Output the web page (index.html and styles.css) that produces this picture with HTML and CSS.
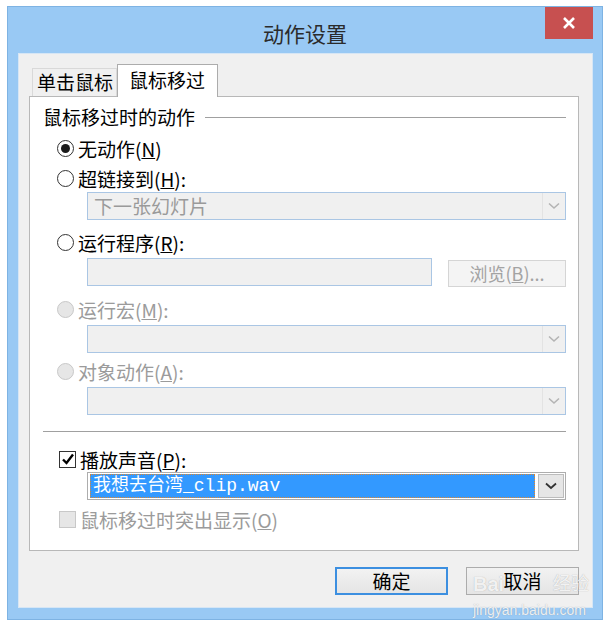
FILE: index.html
```html
<!DOCTYPE html>
<html lang="zh-CN">
<head>
    <meta charset="UTF-8">
    <title>动作设置</title>
    <link rel="stylesheet" href="styles.css">
</head>
<body>

    <div class="window">
        <!-- 标题栏 -->
        <div class="titlebar">
            <span></span>
            <span class="title">动作设置</span>
            <div class="close">
                <svg width="14" height="14" viewBox="0 0 14 14"><path d="M2 2 L12 12 M12 2 L2 12" stroke="#fff" stroke-width="2.6"/></svg>
            </div>
        </div>

        <div class="client">
            <div class="tabs">
                <div class="tab">单击鼠标</div>
                <div class="tab active">鼠标移过</div>
            </div>

            <div class="pane">
                <div class="group-title">
                    <span>鼠标移过时的动作</span>
                    <span class="rule"></span>
                </div>

                <div class="option first"><span class="radio checked"></span>无动作(<u>N</u>)</div>
                <div class="option"><span class="radio"></span>超链接到(<u>H</u>):</div>
                <div class="combo disabled">
                    <span class="combo-text">下一张幻灯片</span>
                    <span class="combo-arrow"><svg width="12" height="8" viewBox="0 0 12 8"><path d="M1 1.5 L6 6 L11 1.5" fill="none" stroke="#b4b4b4" stroke-width="1.6"/></svg></span>
                </div>

                <div class="option after-link"><span class="radio"></span>运行程序(<u>R</u>):</div>
                <div class="field-row">
                    <div class="textbox"></div>
                    <div class="browse">浏览(<u>B</u>)...</div>
                </div>

                <div class="option muted"><span class="radio off"></span>运行宏(<u>M</u>):</div>
                <div class="combo disabled">
                    <span class="combo-text"></span>
                    <span class="combo-arrow"><svg width="12" height="8" viewBox="0 0 12 8"><path d="M1 1.5 L6 6 L11 1.5" fill="none" stroke="#b4b4b4" stroke-width="1.6"/></svg></span>
                </div>

                <div class="option muted"><span class="radio off"></span>对象动作(<u>A</u>):</div>
                <div class="combo disabled">
                    <span class="combo-text"></span>
                    <span class="combo-arrow"><svg width="12" height="8" viewBox="0 0 12 8"><path d="M1 1.5 L6 6 L11 1.5" fill="none" stroke="#b4b4b4" stroke-width="1.6"/></svg></span>
                </div>

                <div class="separator"></div>

                <div class="option check-row"><span class="checkbox checked"><svg width="14" height="14" viewBox="0 0 14 14"><path d="M2 7.5 L5.5 11 L12 2.5" fill="none" stroke="#000" stroke-width="2.4"/></svg></span>播放声音(<u>P</u>):</div>
                <div class="combo active">
                    <span class="combo-text"><span class="selected">我想去台湾_clip.wav</span></span>
                    <span class="combo-arrow"><svg width="12" height="8" viewBox="0 0 12 8"><path d="M1 1.5 L6 6 L11 1.5" fill="none" stroke="#333" stroke-width="1.8"/></svg></span>
                </div>

                <div class="option muted last"><span class="checkbox off"></span>鼠标移过时突出显示(<u>O</u>)</div>
            </div>

            <div class="buttons">
                <div class="btn default">确定</div>
                <div class="btn">取消</div>
            </div>
        </div>

        <!-- 水印 -->
        <div class="watermark">
            <div class="wm-logo"><span>Bai</span><span class="wm-cn">经验</span></div>
            <div class="wm-url">jingyan.baidu.com</div>
        </div>
    </div>

</body>
</html>
```

FILE: styles.css
```css
body {
    margin: 0;
    padding: 6px 0 0 7px;
    background-color: #fff;
    font-family: "Microsoft YaHei", "Noto Sans CJK SC", sans-serif;
    font-size: 18px;
    color: #000;
}
.window {
    position: relative;
    width: 596px;
    height: 614px;
    box-sizing: border-box;
    border: 1px solid #7eb3e3;
    background-color: #99c9f4;
    display: flex;
    flex-direction: column;
}
.titlebar {
    height: 46px;
    display: grid;
    grid-template-columns: 1fr auto 1fr;
    align-items: start;
}
.title {
    margin-top: 12px;
    font-size: 21px;
    color: #2b2b2b;
    line-height: 28px;
}
.close {
    justify-self: end;
    margin-right: 9px;
    width: 48px;
    height: 32px;
    background-color: #c75050;
    display: flex;
    align-items: center;
    justify-content: center;
}
.client {
    flex: 1;
    margin: 0 9px 11px 10px;
    border: 1px solid #d6e6f5;
    background-color: #f0f0f0;
    padding: 10px 13px 0 10px;
    display: flex;
    flex-direction: column;
}
.tabs {
    display: flex;
    align-items: flex-end;
    height: 32px;
    padding-left: 3px;
}
.tab {
    height: 27px;
    line-height: 26px;
    padding: 0 3px 0 4px;
    border: 1px solid #d9d9d9;
    border-bottom: none;
    background-color: #f0f0f0;
    font-size: 19px;
}
.tab.active {
    height: 32px;
    line-height: 30px;
    padding: 0 12px 0 11px;
    border-color: #acacac;
    background-color: #fff;
    position: relative;
    top: 1px;
}
.pane {
    height: 455px;
    box-sizing: border-box;
    border: 1px solid #b8b8b8;
    background-color: #fff;
    padding: 8px 12px 0 13px;
    display: flex;
    flex-direction: column;
}
.group-title {
    display: flex;
    align-items: center;
    height: 22px;
    font-size: 19px;
}
.rule {
    flex: 1;
    height: 1px;
    margin: 2px 0 0 10px;
    background-color: #a0a0a0;
}
.option {
    display: flex;
    align-items: center;
    height: 24px;
    margin-top: 6px;
    padding-left: 14px;
    font-size: 19px;
}
.option.first {
    margin-top: 9px;
}
.option.after-link {
    margin-top: 10px;
}
.option.muted {
    color: #9b9b9b;
}
.radio {
    width: 17px;
    height: 17px;
    box-sizing: border-box;
    border: 1px solid #333;
    border-radius: 50%;
    margin-right: 4px;
    background-color: #fff;
    display: flex;
    align-items: center;
    justify-content: center;
}
.radio.checked::after {
    content: "";
    width: 9px;
    height: 9px;
    border-radius: 50%;
    background-color: #1a1a1a;
}
.radio.off {
    border-color: #c8c8c8;
    background-color: #e6e6e6;
}
.checkbox {
    width: 17px;
    height: 17px;
    box-sizing: border-box;
    border: 1px solid #333;
    margin-right: 4px;
    background-color: #fff;
    display: flex;
    align-items: center;
    justify-content: center;
}
.checkbox.off {
    border-color: #c8c8c8;
    background-color: #e6e6e6;
}
.combo {
    margin: 2px 0 0 44px;
    height: 28px;
    box-sizing: border-box;
    display: flex;
    border: 1px solid #adadad;
}
.combo.disabled {
    border-color: #aac6e4;
    background-color: #f0f0f0;
    color: #9a9a9a;
}
.combo-text {
    flex: 1;
    padding: 1px 2px;
    line-height: 24px;
    font-size: 19px;
    display: flex;
}
.combo.disabled .combo-text {
    padding-left: 6px;
}
.combo-arrow {
    width: 22px;
    border-left: 1px solid #e3e3e3;
    display: flex;
    align-items: center;
    justify-content: center;
}
.combo.active {
    margin-top: 1px;
    background-color: #fff;
}
.combo.active .combo-arrow {
    width: 24px;
    margin: 1px;
    border: 1px solid #bcbcbc;
    background-color: #e6e6e6;
}
.selected {
    flex: 1;
    background-color: #3399ff;
    color: #fff;
    outline: 1px dotted #e0872e;
    outline-offset: -1px;
    padding-left: 3px;
    font-family: "Liberation Mono", "Noto Sans CJK SC", monospace;
    font-size: 18px;
    line-height: 24px;
}
.field-row {
    display: flex;
    align-items: flex-start;
    margin: 4px 0 0 44px;
}
.textbox {
    width: 345px;
    height: 28px;
    box-sizing: border-box;
    border: 1px solid #aac6e4;
    background-color: #f0f0f0;
}
.browse {
    margin: 2px 0 0 16px;
    flex: 1;
    height: 27px;
    box-sizing: border-box;
    border: 1px solid #d5d5d5;
    background-color: #f4f4f4;
    color: #a3a3a3;
    font-size: 18px;
    line-height: 25px;
    text-align: center;
}
.option.muted + .combo {
    margin-top: 4px;
}
.field-row + .option {
    margin-top: 10px;
}
.separator {
    height: 1px;
    margin: 16px 0 0 0;
    background-color: #a0a0a0;
}
.option.check-row {
    margin-top: 15px;
    padding-left: 16px;
}
.option.last {
    margin-top: 7px;
    padding-left: 16px;
}
.buttons {
    display: flex;
    justify-content: flex-end;
    gap: 18px;
    margin-top: 16px;
}
.btn {
    width: 113px;
    height: 28px;
    box-sizing: border-box;
    border: 1px solid #acacac;
    background: linear-gradient(#f2f2f2, #e5e5e5);
    font-size: 19px;
    line-height: 25px;
    text-align: center;
}
.btn.default {
    border: 2px solid #3c8fe0;
    line-height: 23px;
}
.watermark {
    position: absolute;
    left: 465px;
    top: 564px;
    width: 116px;
    color: rgba(255, 255, 255, 0.85);
    text-shadow: 0 0 1px rgba(120, 120, 120, 0.6);
    font-family: "Liberation Sans", "Noto Sans CJK SC", sans-serif;
}
.wm-logo {
    display: flex;
    justify-content: space-between;
    font-size: 20px;
    font-weight: bold;
    line-height: 26px;
}
.wm-cn {
    font-size: 18px;
    font-weight: normal;
}
.wm-url {
    margin-top: 5px;
    font-size: 14px;
    line-height: 16px;
}
```
